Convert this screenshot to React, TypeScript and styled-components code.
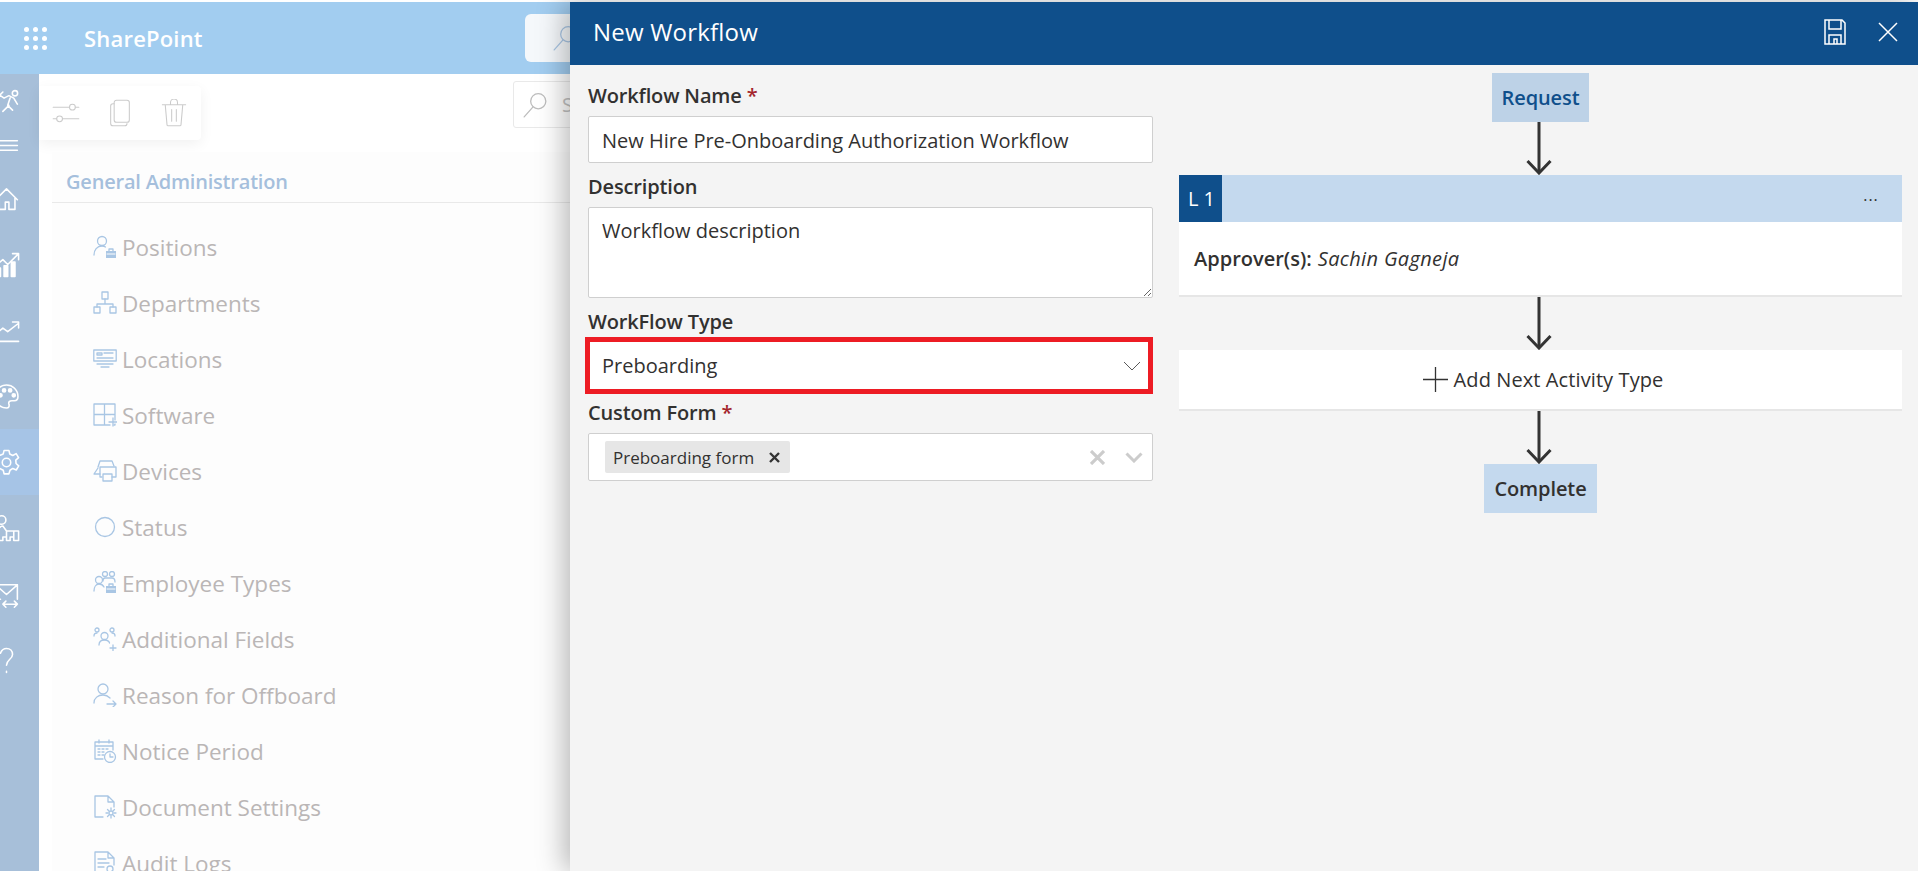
import React from "react";
import styled, { createGlobalStyle } from "styled-components";

const FONT = `"Open Sans", "Noto Sans", "Liberation Sans", sans-serif`;

const GlobalStyle = createGlobalStyle`
  html, body {
    margin: 0;
    height: 100%;
    overflow: hidden;
    background: #fff;
    font-family: ${FONT};
  }
  * {
    box-sizing: border-box;
  }
`;

const Glyph: React.FC<{ children: React.ReactNode; size?: number; sw?: number }> = ({
  children,
  size = 24,
  sw = 1.3,
}) => (
  <svg
    width={size}
    height={size}
    viewBox="0 0 24 24"
    fill="none"
    stroke="currentColor"
    strokeWidth={sw}
    strokeLinecap="round"
    strokeLinejoin="round"
  >
    {children}
  </svg>
);

const Briefcase = ({ x = 13, y = 14 }: { x?: number; y?: number }) => (
  <g>
    <rect x={x} y={y + 2} width="10" height="7" fill="currentColor" stroke="none" />
    <path d={`M${x + 3} ${y + 2}v-2h4v2`} />
    <path d={`M${x + 1} ${y + 5}h8`} stroke="#fdfdfd" strokeWidth="1" />
  </g>
);

const listItems: { label: string; icon: React.ReactNode }[] = [
  {
    label: "Positions",
    icon: (
      <>
        <circle cx="9" cy="6" r="4.5" />
        <path d="M1 20c0-5 3-9 8-9 1.500 0 2.500.3 3.500 1" />
        <Briefcase />
      </>
    ),
  },
  {
    label: "Departments",
    icon: (
      <>
        <rect x="9" y="1" width="6" height="7" />
        <path d="M12 8v5M4 16v-3h16v3" />
        <rect x="1" y="16" width="6" height="6" />
        <rect x="17" y="16" width="6" height="6" />
      </>
    ),
  },
  {
    label: "Locations",
    icon: (
      <>
        <rect x="0.800" y="3" width="22.400" height="11" />
        <path d="M4 6h5v2H4zM11 6h9M4 11h16M4 17h16M8 20h8" />
      </>
    ),
  },
  {
    label: "Software",
    icon: (
      <>
        <path d="M1 1h21v21H1zM11.500 1v21M1 11.500h21" />
        <path d="M14 19h10M19 14v10" stroke="#fdfdfd" strokeWidth="3" />
        <path d="M16 19h8M20 15v8" />
      </>
    ),
  },
  {
    label: "Devices",
    icon: (
      <>
        <path d="M5 8l2-6h12l2 5M7 15H1l4-6" />
        <path d="M7 8h16v10h-4M7 8v10h2" />
        <rect x="10" y="15" width="9" height="7" />
      </>
    ),
  },
  {
    label: "Status",
    icon: <circle cx="12" cy="12" r="9.500" />,
  },
  {
    label: "Employee Types",
    icon: (
      <>
        <circle cx="6" cy="9" r="3.500" />
        <path d="M1 20c0-4 2-7 5-7s4 1 5 3" />
        <circle cx="12" cy="3" r="2.500" />
        <circle cx="19" cy="3" r="2.500" />
        <path d="M10 10c0-2 1-3 2-3h7c2 0 3 2 3 4" />
        <Briefcase x={13} y={13} />
      </>
    ),
  },
  {
    label: "Additional Fields",
    icon: (
      <>
        <circle cx="4" cy="3" r="2" />
        <circle cx="19" cy="3" r="2" />
        <circle cx="11.500" cy="9" r="3.500" />
        <path d="M1 9c0-2 1-3 3-3M22 9c0-2-1-3-3-3M6 18c0-3 2-5 5.500-5s5 2 5 3" />
        <path d="M17 21h6M20 18v6" />
      </>
    ),
  },
  {
    label: "Reason for Offboard",
    icon: (
      <>
        <circle cx="10" cy="6" r="5" />
        <path d="M1 20c0-5 4-8 9-8 3 0 5 1 7 3M14 21h9M20 18l3 3-3 3" />
      </>
    ),
  },
  {
    label: "Notice Period",
    icon: (
      <>
        <path d="M10 20H2V3h18v8M2 7h18M6 1v3M16 1v3" />
        <path d="M5 10h2M9 10h2M13 10h2M5 13h2M9 13h2M5 16h2M9 16h2" />
        <circle cx="17" cy="18" r="5.500" />
        <path d="M17 15v3h3" />
      </>
    ),
  },
  {
    label: "Document Settings",
    icon: (
      <>
        <path d="M10 22H2V1h13l6 6v5M15 1v6h6" />
        <circle cx="18" cy="18" r="2" />
        <path d="M18 13v2M18 21v2M13 18h2M21 18h2M14.500 14.500l1.500 1.500M20 20l1.500 1.500M21.500 14.500L20 16M16 20l-1.500 1.500" />
      </>
    ),
  },
  {
    label: "Audit Logs",
    icon: (
      <>
        <path d="M9 22H2V1h13l6 6v7M15 1v6h6" />
        <path d="M5 8h8M5 12h11M5 16h6" />
        <circle cx="17" cy="18" r="3" />
        <path d="M19 20l3 3" />
      </>
    ),
  },
];

const railItems: { key: string; kind: "tall" | "short" | "row"; active?: boolean; icon: React.ReactNode }[] = [
  {
    key: "people",
    kind: "tall",
    icon: (
      <>
        <circle cx="19" cy="6" r="2.200" />
        <path d="M2 12l5-4 3 2 4-2 4 2 3 5M15 10l-2 6 4 4M14 16l-5 5M6 8l3-3M5 14l-2 7" />
      </>
    ),
  },
  {
    key: "menu",
    kind: "short",
    icon: <path d="M-2 8h23M-2 12h23M-2 16h23" />,
  },
  {
    key: "home",
    kind: "row",
    icon: <path d="M3 13L12 4l9 9M6 11v10h5v-6h3v6h5V11" />,
  },
  {
    key: "chart",
    kind: "row",
    icon: (
      <>
        <path d="M3 13l6-5 4 4 8-8M17 3h5v5" />
        <path d="M4 15h3v7H4zM10 13h3v9h-3zM16 10h3v12h-3z" fill="currentColor" />
      </>
    ),
  },
  {
    key: "trend",
    kind: "row",
    icon: <path d="M3 15l6-5 4 3 9-7M17 5h5v5M3 21h19" />,
  },
  {
    key: "palette",
    kind: "row",
    icon: (
      <>
        <path d="M12 2.500a9.500 9.500 0 1 0 0 19c2 0 2.500-1.500 2-3-.6-2 .5-3 2.500-3h2c2.500 0 3-2 3-3.500 0-5.500-4.500-9.500-9.500-9.500z" />
        <circle cx="7" cy="11" r="1.300" fill="currentColor" />
        <circle cx="10" cy="7" r="1.300" fill="currentColor" />
        <circle cx="15" cy="7" r="1.300" fill="currentColor" />
        <circle cx="18" cy="11" r="1.300" fill="currentColor" />
      </>
    ),
  },
  {
    key: "gear",
    kind: "row",
    active: true,
    icon: (
      <>
        <circle cx="12" cy="12" r="3.500" />
        <path d="M10 2h4l.7 3 2.500 1.200 2.800-1.500 2 3.300-2.300 2 .2 2.800 2.200 2-2 3.400-2.900-1.300-2.300 1.500-.9 3h-4l-.7-3-2.500-1.300-2.900 1.300-2-3.400 2.300-2V10L1.900 8l2-3.300L6.800 6 9.300 4.900z" />
      </>
    ),
  },
  {
    key: "hierarchy",
    kind: "row",
    icon: (
      <>
        <circle cx="8" cy="5" r="3.500" />
        <path d="M5 19v-5c0-2 2-4 4-4l3 4h10v8h-4v-3h-3v3h-3v-3h-3v3H5M12 14v5M18 14v5" />
      </>
    ),
  },
  {
    key: "mail",
    kind: "row",
    icon: (
      <>
        <path d="M3 4h18v12M3 4l9 8 9-8M3 16h4" />
        <path d="M9 20h12M11.500 17.500L9 20l2.500 2.500M18.500 17.500L21 20l-2.500 2.500" />
      </>
    ),
  },
  {
    key: "help",
    kind: "row",
    icon: <path d="M7 6c1-3 3-4 5-4 3 0 5 2 5 5 0 4-5 4-5 9M12 21v1" />,
  },
];

const Search = () => (
  <Glyph size={26} sw={1.200}>
    <circle cx="15" cy="8.500" r="7" />
    <path d="M10 14L2 23" />
  </Glyph>
);

const Chevron = () => (
  <svg width="18" height="10" viewBox="0 0 18 10" fill="none" stroke="#5a5a5a" strokeWidth="1">
    <path d="M1 1l8 8 8-8" />
  </svg>
);

const Arrow = () => (
  <ArrowWrap>
    <svg width="26" height="53" viewBox="0 0 26 53" fill="none" stroke="#333" strokeWidth="3">
      <path d="M13 0v51" />
      <path d="M1.500 39L13 51 24.500 39" />
    </svg>
  </ArrowWrap>
);

const App: React.FC = () => {
  return (
    <Page>
      <GlobalStyle />
      <TopBar>
        <Waffle>
          {Array.from({ length: 9 }).map((_, i) => (
            <Dot key={i} />
          ))}
        </Waffle>
        <Brand>SharePoint</Brand>
        <HeaderSearch>
          <Search />
        </HeaderSearch>
      </TopBar>

      <Body>
        <Rail>
          {railItems.map((item) => (
            <RailItem key={item.key} $kind={item.kind} $active={item.active}>
              <Glyph size={29} sw={1.300}>
                {item.icon}
              </Glyph>
            </RailItem>
          ))}
        </Rail>

        <Main>
          <ToolRow>
            <Toolbar>
              <Glyph size={28} sw={0.900}>
                <path d="M1 7h14M20 7h3M1 17h3M9 17h14" />
                <circle cx="17.500" cy="7" r="2.500" />
                <circle cx="6.500" cy="17" r="2.500" />
              </Glyph>
              <Glyph size={28} sw={0.900}>
                <rect x="7" y="1" width="13" height="19" rx="2" />
                <path d="M7 4H6a2 2 0 0 0-2 2v15a2 2 0 0 0 2 2h10a2 2 0 0 0 2-2" />
              </Glyph>
              <Glyph size={28} sw={0.900}>
                <path d="M2 5h20M9 5V3a2 2 0 0 1 6 0v2M4.500 5l1.500 17a1 1 0 0 0 1 1h10a1 1 0 0 0 1-1l1.500-17M10 9v10M14 9v10" />
              </Glyph>
            </Toolbar>
            <ListSearch>
              <Search />
              <SearchText>Search</SearchText>
            </ListSearch>
          </ToolRow>

          <ListArea>
            <SectionTitle>General Administration</SectionTitle>
            <List>
              {listItems.map((item) => (
                <ListRow key={item.label}>
                  <ListIcon>
                    <Glyph>{item.icon}</Glyph>
                  </ListIcon>
                  {item.label}
                </ListRow>
              ))}
            </List>
          </ListArea>
        </Main>
      </Body>

      <Panel>
        <PanelHeader>
          <PanelTitle>New Workflow</PanelTitle>
          <PanelActions>
            <svg width="22" height="26" viewBox="0 0 22 26" fill="none" stroke="#fff" strokeWidth="1.500">
              <path d="M1 1h17l3 3v21H1z" />
              <path d="M5 1v9h12V1M5 25v-9h12v9M10 25v-5h3v5" />
            </svg>
            <svg width="20" height="20" viewBox="0 0 20 20" fill="none" stroke="#fff" strokeWidth="1.500">
              <path d="M1 1l18 18M19 1L1 19" />
            </svg>
          </PanelActions>
        </PanelHeader>

        <PanelBody>
          <Form>
            <Field>
              <Label>
                Workflow Name <Required>*</Required>
              </Label>
              <TextInput defaultValue="New Hire Pre-Onboarding Authorization Workflow" />
            </Field>
            <Field>
              <Label>Description</Label>
              <TextArea defaultValue="Workflow description" />
            </Field>
            <Field>
              <Label>WorkFlow Type</Label>
              <Highlighted>
                <SelectBox>
                  Preboarding
                  <Chevron />
                </SelectBox>
              </Highlighted>
            </Field>
            <Field>
              <Label>
                Custom Form <Required>*</Required>
              </Label>
              <MultiSelect>
                <Tag>
                  Preboarding form
                  <TagRemove>
                    <svg width="11" height="11" viewBox="0 0 11 11" stroke="#333" strokeWidth="2.400">
                      <path d="M1 1l9 9M10 1l-9 9" />
                    </svg>
                  </TagRemove>
                </Tag>
                <SelectControls>
                  <svg width="15" height="15" viewBox="0 0 15 15" stroke="#ccc" strokeWidth="3.200">
                    <path d="M1 1l13 13M14 1L1 14" />
                  </svg>
                  <svg width="18" height="11" viewBox="0 0 18 11" fill="none" stroke="#ccc" strokeWidth="3">
                    <path d="M1.500 1.500L9 9l7.500-7.500" />
                  </svg>
                </SelectControls>
              </MultiSelect>
            </Field>
          </Form>

          <Flow>
            <FlowNode>Request</FlowNode>
            <Arrow />
            <StageCard>
              <StageBar>
                <StageBadge>L 1</StageBadge>
                <StageMenu>...</StageMenu>
              </StageBar>
              <StageBody>
                <strong>Approver(s):</strong> <em>Sachin Gagneja</em>
              </StageBody>
            </StageCard>
            <Arrow />
            <AddRow>
              <svg width="25" height="25" viewBox="0 0 25 25" stroke="#333" strokeWidth="1.300">
                <path d="M0 12.500h25M12.500 0v25" />
              </svg>
              Add Next Activity Type
            </AddRow>
            <Arrow />
            <FlowNode $end>Complete</FlowNode>
          </Flow>
        </PanelBody>
      </Panel>
    </Page>
  );
};

export default App;

const Page = styled.div`
  position: relative;
  height: 100vh;
  padding-top: 2px;
  display: flex;
  flex-direction: column;
  overflow: hidden;
`;

const TopBar = styled.header`
  height: 72px;
  flex: none;
  background: #a2cdf0;
  display: flex;
  align-items: center;
  padding-left: 24px;
`;

const Waffle = styled.div`
  display: grid;
  grid-template-columns: repeat(3, 5px);
  gap: 4px;
  margin-right: 37px;
`;

const Dot = styled.span`
  width: 5px;
  height: 5px;
  border-radius: 50%;
  background: #fff;
`;

const Brand = styled.div`
  width: 324px;
  flex: none;
  margin-right: 117px;
  color: #fff;
  font-size: 22px;
  font-weight: 600;
  letter-spacing: 0.2px;
  white-space: nowrap;
`;

const HeaderSearch = styled.div`
  width: 400px;
  height: 48px;
  flex: none;
  background: #f5f8fb;
  border-radius: 6px;
  display: flex;
  align-items: center;
  padding-left: 27px;
  color: #a9c6e4;
`;

const Body = styled.div`
  flex: 1;
  min-height: 0;
  display: flex;
`;

const Rail = styled.nav`
  width: 39px;
  flex: none;
  background: #a7bfd9;
  display: flex;
  flex-direction: column;
  overflow: hidden;
`;

const railHeights = { tall: 52, short: 39, row: 66 };

const RailItem = styled.div<{ $kind: "tall" | "short" | "row"; $active?: boolean }>`
  height: ${(p) => railHeights[p.$kind]}px;
  flex: none;
  display: flex;
  align-items: center;
  color: #fff;
  background: ${(p) => (p.$active ? "#a6c4e6" : "transparent")};

  svg {
    margin-left: -8px;
    overflow: visible;
  }
`;

const Main = styled.main`
  flex: 1;
  min-width: 0;
  display: flex;
  flex-direction: column;
`;

const ToolRow = styled.div`
  height: 78px;
  flex: none;
  padding-top: 7px;
  display: flex;
  align-items: flex-start;
`;

const Toolbar = styled.div`
  width: 162px;
  height: 54px;
  margin-top: 5px;
  flex: none;
  background: #fff;
  border-radius: 0 4px 4px 0;
  box-shadow: 0 4px 14px rgba(0, 0, 0, 0.06);
  display: flex;
  align-items: center;
  gap: 26px;
  padding-left: 13px;
  color: #cbcbcb;
`;

const ListSearch = styled.div`
  width: 300px;
  height: 47px;
  margin-left: 312px;
  flex: none;
  border: 1px solid #e9e9e9;
  border-radius: 3px;
  display: flex;
  align-items: center;
  gap: 14px;
  padding-left: 8px;
  color: #bdbdbd;
`;

const SearchText = styled.span`
  font-size: 20px;
  color: #c2c2c2;
`;

const ListArea = styled.section`
  flex: 1;
  min-height: 0;
  margin-left: 13px;
  background: #fdfdfd;
  overflow: hidden;
`;

const SectionTitle = styled.h2`
  margin: 0;
  height: 51px;
  padding: 9px 0 0 14px;
  border-bottom: 1px solid #e9e9e9;
  display: flex;
  align-items: center;
  color: #a5bfdc;
  font-size: 20px;
  font-weight: 600;
  letter-spacing: -0.2px;
`;

const List = styled.div`
  padding: 16px 0 0 41px;
`;

const ListRow = styled.div`
  height: 56px;
  display: flex;
  align-items: center;
  gap: 5px;
  color: #bab6b6;
  font-size: 22.500px;
  white-space: nowrap;
`;

const ListIcon = styled.span`
  display: flex;
  color: #a9c6e4;
`;

const Panel = styled.aside`
  position: absolute;
  top: 2px;
  left: 570px;
  right: 0;
  bottom: 0;
  background: #f4f4f4;
  box-shadow: -6px 0 26px rgba(0, 0, 0, 0.28);
  display: flex;
  flex-direction: column;
`;

const PanelHeader = styled.div`
  height: 63px;
  flex: none;
  background: #0f4f8b;
  display: flex;
  align-items: center;
  justify-content: space-between;
  padding: 0 20px 4px 23px;
  color: #fff;
`;

const PanelTitle = styled.div`
  font-size: 24px;
  letter-spacing: 0.2px;
`;

const PanelActions = styled.div`
  display: flex;
  align-items: center;
  gap: 32px;
`;

const PanelBody = styled.div`
  flex: 1;
  min-height: 0;
  display: flex;
  padding-left: 18px;
`;

const Form = styled.form`
  width: 565px;
  flex: none;
  padding-top: 19px;
  display: flex;
  flex-direction: column;
  gap: 12px;
`;

const Field = styled.div`
  display: flex;
  flex-direction: column;
  gap: 8px;
`;

const Label = styled.label`
  height: 24px;
  line-height: 24px;
  font-size: 20px;
  font-weight: 600;
  letter-spacing: -0.15px;
  color: #323130;
`;

const Required = styled.span`
  color: #a4262c;
`;

const TextInput = styled.input`
  height: 47px;
  padding: 1px 12px 0 13px;
  border: 1px solid #cfcfcf;
  border-radius: 2px;
  background: #fff;
  color: #323130;
  font-family: ${FONT};
  font-size: 20px;
  outline: none;
`;

const TextArea = styled.textarea`
  height: 91px;
  padding: 9px 13px;
  border: 1px solid #cfcfcf;
  border-radius: 2px;
  background: #fff;
  color: #323130;
  font-family: ${FONT};
  font-size: 20px;
  outline: none;
`;

const Highlighted = styled.div`
  position: relative;

  &::after {
    content: "";
    position: absolute;
    top: -5px;
    bottom: -5px;
    left: -3px;
    right: 0;
    border: 5px solid #ed1c24;
    pointer-events: none;
  }
`;

const SelectBox = styled.div`
  height: 47px;
  padding: 0 12px 0 14px;
  background: #fff;
  color: #323130;
  font-size: 20px;
  display: flex;
  align-items: center;
  justify-content: space-between;
`;

const MultiSelect = styled.div`
  height: 48px;
  padding: 0 9px 0 16px;
  border: 1px solid #cfcfcf;
  border-radius: 2px;
  background: #fff;
  display: flex;
  align-items: center;
  justify-content: space-between;
`;

const Tag = styled.div`
  height: 32px;
  padding: 0 10px 0 8px;
  border-radius: 2px;
  background: #e6e6e6;
  color: #323130;
  font-size: 17px;
  display: flex;
  align-items: center;
  gap: 15px;
`;

const TagRemove = styled.span`
  display: flex;
`;

const SelectControls = styled.div`
  display: flex;
  align-items: center;
  gap: 20px;
`;

const Flow = styled.div`
  width: 723px;
  flex: none;
  margin-left: 26px;
  padding-top: 8px;
  display: flex;
  flex-direction: column;
  align-items: center;
`;

const FlowNode = styled.div<{ $end?: boolean }>`
  height: 49px;
  padding: 0 10px;
  background: ${(p) => (p.$end ? "#c4d9ee" : "#bdd2e7")};
  color: ${(p) => (p.$end ? "#323130" : "#0f4f8b")};
  font-size: 20px;
  font-weight: 600;
  letter-spacing: -0.1px;
  display: flex;
  align-items: center;
  justify-content: center;
`;

const ArrowWrap = styled.div`
  height: 53px;
  margin-right: 3px;
  display: flex;
`;

const StageCard = styled.div`
  width: 100%;
  background: #fff;
  border-bottom: 2px solid #e6e6e6;
`;

const StageBar = styled.div`
  height: 47px;
  background: #c4d9ee;
  display: flex;
  align-items: stretch;
  justify-content: space-between;
`;

const StageBadge = styled.div`
  width: 43px;
  padding-left: 2px;
  background: #0f4f8b;
  color: #fff;
  font-size: 20px;
  font-weight: 500;
  display: flex;
  align-items: center;
  justify-content: center;
`;

const StageMenu = styled.div`
  width: 62px;
  padding-bottom: 8px;
  color: #323130;
  font-size: 16px;
  letter-spacing: 1px;
  display: flex;
  align-items: center;
  justify-content: center;
`;

const StageBody = styled.div`
  height: 73px;
  padding: 0 15px;
  color: #323130;
  font-size: 20px;
  display: flex;
  align-items: center;
  gap: 6px;

  strong {
    font-weight: 600;
  }

  em {
    letter-spacing: 0.35px;
  }
`;

const AddRow = styled.div`
  width: 100%;
  height: 61px;
  padding-left: 5px;
  background: #fff;
  border-bottom: 2px solid #e6e6e6;
  color: #323130;
  font-size: 20px;
  letter-spacing: 0.1px;
  display: flex;
  align-items: center;
  justify-content: center;
  gap: 6px;
`;
